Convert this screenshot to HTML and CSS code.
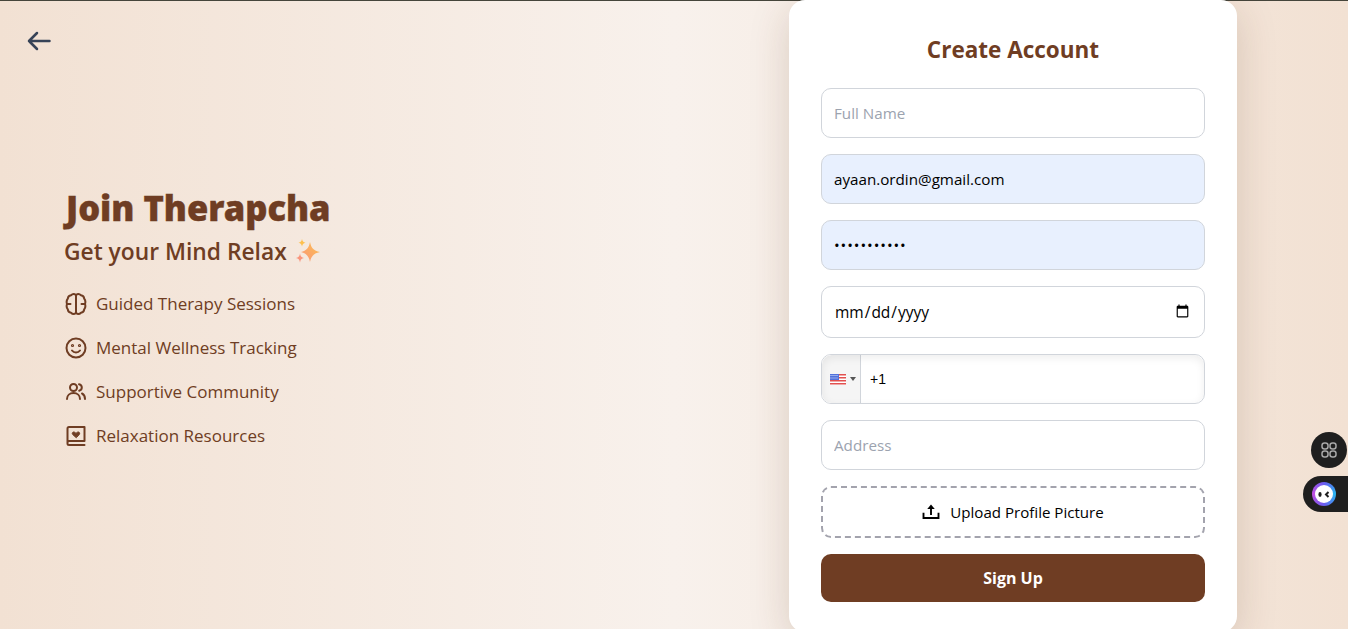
FILE: index.html
```html
<!DOCTYPE html>
<html lang="en">

<head>
    <meta charset="UTF-8">
    <meta name="viewport" content="width=device-width, initial-scale=1.0">
    <title>Sign Up</title>
    <link rel="stylesheet" href="styles.css">
</head>

<body>
    <div class="page">
        <a href="#" class="back-link" aria-label="Back">
            <svg width="24" height="24" viewBox="0 0 24 24" fill="none" stroke="currentColor" stroke-width="2.500" stroke-linecap="round" stroke-linejoin="round">
                <path d="M22.500 12H2M10 4l-8 8 8 8"/>
            </svg>
        </a>

        <div class="intro">
            <h1>Join Therapcha</h1>
            <h2>Get your Mind Relax
                <svg class="sparkles" width="26" height="26" viewBox="0 0 26 26">
                    <defs>
                        <linearGradient id="spark" x1="0" y1="1" x2="1" y2="0">
                            <stop offset="0" stop-color="#f9957c"/>
                            <stop offset="1" stop-color="#fdc04e"/>
                        </linearGradient>
                    </defs>
                    <path fill="url(#spark)" d="M15 3c1.200 6 3.500 8.500 10 10-6.500 1.500-8.800 4-10 10-1.200-6-3.500-8.500-9-10 5.500-1.500 7.800-4 9-10z"/>
                    <path fill="#fdc04e" d="M7 0c.5 2.400 1.200 3.300 3.500 3.800-2.300.6-3 1.400-3.500 3.800-.5-2.400-1.200-3.200-3.500-3.800C5.800 3.300 6.500 2.400 7 0z"/>
                    <path fill="#f9957c" d="M5 14.500c.6 3 1.500 4 4 4.500-2.500.6-3.400 1.500-4 4.500-.6-3-1.500-3.900-4-4.500 2.500-.5 3.400-1.500 4-4.500z"/>
                </svg>
            </h2>
            <ul class="features">
                <li>
                    <svg width="24" height="24" viewBox="0 0 24 24" fill="none" stroke="currentColor" stroke-width="2" stroke-linecap="round" stroke-linejoin="round">
                        <path d="M12 3c-1.200-.9-3.500-1.200-5 .3-1.600.2-3 1.600-3.200 3.300C2.700 8 2.300 10 3 12c-.7 2 -.3 4 .8 5.400.2 1.700 1.600 3.100 3.200 3.300 1.500 1.500 3.800 1.200 5 .3 1.200.9 3.500 1.200 5-.3 1.600-.2 3-1.600 3.200-3.300 1.100-1.400 1.500-3.400.8-5.400.7-2 .3-4-.8-5.400C20 4.900 18.600 3.500 17 3.300 15.500 1.800 13.200 2.100 12 3z"/>
                        <path d="M12 3v18M3 12h3.500M21 12h-3.500"/>
                    </svg>
                    Guided Therapy Sessions
                </li>
                <li>
                    <svg width="24" height="24" viewBox="0 0 24 24" fill="none" stroke="currentColor" stroke-width="2" stroke-linecap="round" stroke-linejoin="round">
                        <circle cx="12" cy="12" r="9.500"/>
                        <path d="M8 14.500c1 1.300 2.400 2 4 2s3-.7 4-2"/>
                        <circle cx="8.500" cy="9.500" r=".6"/>
                        <circle cx="15.500" cy="9.500" r=".6"/>
                    </svg>
                    Mental Wellness Tracking
                </li>
                <li>
                    <svg width="24" height="24" viewBox="0 0 24 24" fill="none" stroke="currentColor" stroke-width="2" stroke-linecap="round" stroke-linejoin="round">
                        <circle cx="9.500" cy="7.500" r="3.500"/>
                        <path d="M3 19c0-3.500 2.800-6 6.500-6s6.500 2.500 6.500 6M15 4.200c1.700.4 2.800 1.700 2.800 3.300s-1 2.800-2.600 3.300M18 13.500c1.800.8 3 2.800 3 5.500"/>
                    </svg>
                    Supportive Community
                </li>
                <li>
                    <svg width="24" height="24" viewBox="0 0 24 24" fill="none" stroke="currentColor" stroke-width="2" stroke-linecap="round" stroke-linejoin="round">
                        <path d="M20.500 17V3H5a1.500 1.500 0 0 0-1.500 1.500v15A1.500 1.500 0 0 0 5 21h15.500M3.500 18.500A1.500 1.500 0 0 1 5 17h15.500"/>
                        <path fill="currentColor" stroke-width="1" d="M12 13.500l-3.300-3c-1.400-1.500.7-3.500 2.300-2l1 .9 1-.9c1.600-1.500 3.700.5 2.300 2z"/>
                    </svg>
                    Relaxation Resources
                </li>
            </ul>
        </div>

        <div class="form-side">
            <div class="card">
                <h3>Create Account</h3>
                <form class="signup-form">
                    <input type="text" placeholder="Full Name">
                    <input type="email" class="autofilled" value="ayaan.ordin@gmail.com">
                    <input type="password" class="autofilled password-input" value="12345678901">
                    <input type="date" class="date-input">
                    <div class="phone">
                        <div class="flag-box">
                            <svg class="flag" width="16" height="11" viewBox="0 0 16 11">
                                <rect width="16" height="11" fill="#fff"/>
                                <path fill="#e2504f" d="M0 0h16v1.500H0zM0 3h16v1.500H0zM0 6h16v1.500H0zM0 9h16v1.500H0z"/>
                                <rect width="9" height="6" fill="#5272dc"/>
                                <path stroke="#dfe6fa" stroke-dasharray="1 1" d="M.5 1.500h8M.5 4h8"/>
                            </svg>
                            <span class="caret"></span>
                        </div>
                        <input type="tel" value="+1">
                    </div>
                    <input type="text" placeholder="Address">
                    <label class="upload">
                        <svg width="18" height="18" viewBox="0 0 24 24" fill="none" stroke="currentColor" stroke-width="2.500">
                            <path d="M2 13v7h20v-7"/>
                            <path d="M12 16V7"/>
                            <path fill="currentColor" stroke="none" d="M12 2l5 6H7z"/>
                        </svg>
                        Upload Profile Picture
                    </label>
                    <button type="button" class="submit-btn">Sign Up</button>
                </form>
            </div>
        </div>

        <div class="widget-round">
            <svg width="18" height="18" viewBox="0 0 18 18" fill="none" stroke="#a8a8a8" stroke-width="1.500">
                <rect x="2" y="2" width="6" height="6" rx="2.500"/>
                <rect x="10" y="2" width="6" height="6" rx="2.500"/>
                <rect x="2" y="10" width="6" height="6" rx="2.500"/>
                <rect x="10" y="10" width="6" height="6" rx="2.500"/>
            </svg>
        </div>
        <div class="widget-pill">
            <span class="bot-ring">
                <svg class="bot-face" width="18" height="18" viewBox="0 0 18 18">
                    <circle cx="9" cy="9" r="9" fill="white"/>
                    <ellipse cx="5" cy="9.500" rx="1.600" ry="2.400" fill="#1f1f1f"/>
                    <path d="M13.500 7l-2.500 2.500 2.500 2.500" fill="none" stroke="#1f1f1f" stroke-width="2"/>
                </svg>
            </span>
        </div>
    </div>
</body>
</html>
```

FILE: styles.css
```css
* {
    box-sizing: border-box;
}

html,
body {
    height: 100%;
    margin: 0;
    overflow: hidden;
}

body {
    font-family: "Open Sans", "Noto Sans", sans-serif;
    color: #6f3d23;
}

.page {
    display: flex;
    height: 629px;
    border-top: 1px solid #45453b;
    background: linear-gradient(90deg, #f2e1d3 0%, #f8f1ec 50%, #f2e1d3 100%);
}

.back-link {
    position: absolute;
    top: 29px;
    left: 27px;
    color: #374357;
    display: block;
    height: 24px;
}

.intro {
    flex: 0 0 678px;
    padding: 187px 0 0 64px;
}

.intro h1 {
    margin: 0 0 0 2px;
    font-family: "Noto Sans", sans-serif;
    font-size: 34.5px;
    line-height: 40px;
    font-weight: 900;
    -webkit-text-stroke: 0.4px #6f3d23;
}

.intro h2 {
    margin: 8px 0 22px;
    font-size: 22.8px;
    line-height: 32px;
    font-weight: 600;
    display: flex;
    align-items: center;
    gap: 8px;
}

.features {
    list-style: none;
    margin: 0;
    padding: 0;
    display: flex;
    flex-direction: column;
    gap: 16px;
    font-size: 17px;
    line-height: 28px;
}

.features li {
    display: flex;
    align-items: center;
    gap: 8px;
}

.form-side {
    flex: 1;
    display: flex;
    justify-content: center;
}

.card {
    width: 448px;
    height: 632px;
    margin-top: -1px;
    padding: 32px;
    background: white;
    border-radius: 16px;
    box-shadow: 0 10px 40px rgba(90, 50, 20, 0.18);
}

.card h3 {
    margin: 2px 0 22px;
    text-align: center;
    font-size: 22.5px;
    line-height: 32px;
    font-weight: 700;
}

.signup-form {
    display: flex;
    flex-direction: column;
    gap: 16px;
}

.signup-form input {
    width: 100%;
    height: 50px;
    padding: 0 12px;
    border: 1px solid #d1d5db;
    border-radius: 10px;
    background: white;
    color: black;
    font-family: inherit;
    font-size: 15.2px;
    outline: none;
}

.signup-form input::placeholder {
    color: #9ca3af;
}

.signup-form .autofilled {
    background: #e8f0fe;
}

.signup-form .password-input {
    letter-spacing: 0.9px;
}

.signup-form .date-input {
    height: 52px;
    font-size: 15.5px;
}

.phone {
    display: flex;
    height: 50px;
    border: 1px solid #d1d5db;
    border-radius: 10px;
    overflow: hidden;
    position: relative;
}

.phone::after {
    content: "";
    position: absolute;
    inset: 0;
    border-radius: 10px;
    box-shadow: inset 0 3px 8px rgba(0, 0, 0, 0.07);
    pointer-events: none;
}

.flag-box {
    flex: 0 0 39px;
    display: flex;
    align-items: center;
    gap: 4px;
    padding-left: 8px;
    background: #f5f5f5;
    border-right: 1px solid #d1d5db;
}

.caret {
    border-left: 3px solid transparent;
    border-right: 3px solid transparent;
    border-top: 4px solid #555;
}

.signup-form .phone input {
    flex: 1;
    height: 48px;
    padding: 0 9px;
    border: none;
    border-radius: 0;
    background: transparent;
    font-family: "Liberation Sans", sans-serif;
    font-size: 14px;
}

.upload {
    display: flex;
    align-items: center;
    justify-content: center;
    gap: 10px;
    height: 52px;
    border: 2px dashed #a3a3ad;
    border-radius: 10px;
    color: black;
    font-size: 15.1px;
}

.submit-btn {
    height: 48px;
    border: none;
    border-radius: 10px;
    background: #6f3d23;
    color: white;
    font-family: inherit;
    font-size: 16px;
    font-weight: 700;
}

.widget-round {
    position: fixed;
    top: 432px;
    left: 1311px;
    width: 36px;
    height: 36px;
    border-radius: 50%;
    background: #1f1f1f;
    display: flex;
    align-items: center;
    justify-content: center;
}

.widget-pill {
    position: fixed;
    top: 476px;
    left: 1303px;
    width: 45px;
    height: 36px;
    border-radius: 18px 0 0 18px;
    background: #1f1f1f;
    display: flex;
    align-items: center;
    padding-left: 9px;
}

.bot-ring {
    width: 24px;
    height: 24px;
    border-radius: 50%;
    background: conic-gradient(#6a5cf0, #29b6f0, #6a5cf0, #c04fe0, #6a5cf0);
    display: flex;
    align-items: center;
    justify-content: center;
}
```
